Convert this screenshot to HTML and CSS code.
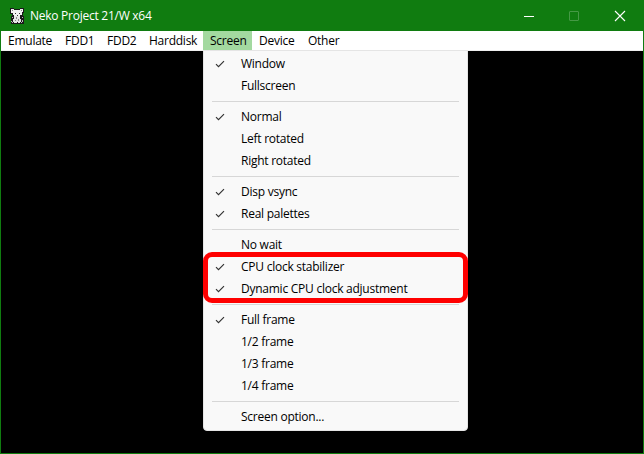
FILE: index.html
```html
<!DOCTYPE html>
<html lang="en">
<head>
<meta charset="utf-8">
<title>Neko Project 21/W x64</title>
<link rel="stylesheet" href="styles.css">
</head>
<body>
<svg width="0" height="0" class="defs"><symbol id="check" viewBox="0 0 10 8"><path d="M1 4.2 3.5 6.7 9 1.2" fill="none" stroke="#333" stroke-width="1.15"/></symbol></svg>
<div class="window">
  <header class="titlebar">
    <svg class="logo" width="16" height="16" viewBox="0 0 16 16" shape-rendering="crispEdges">
      <path fill="#1a1a1a" d="M1 0h4v1h6V0h4v5h-1v3h1v8H2V8h1V6H1z"/>
      <path fill="#f2f2f2" d="M2 1h3v1h6V1h3v3h-1v3h-2v1H5V7H4V5H2z"/>
      <path fill="#e6e6e6" d="M5 8h6v3h1v3h-1v1H9v-1H8v1H5v-1H4v-3h1z"/>
      <path fill="#888" d="M3 2h1v1H3zM12 2h1v1h-1zM7 9h1v2H7zM9 11h1v2H9zM6 12h1v1H6z"/>
      <path fill="#bbb" d="M3 9h1v1H3zM13 9h1v1h-1zM2 13h1v1H2zM13 12h1v2h-1zM3 14h1v1H3zM12 14h1v1h-1z"/>
      <path fill="#333" d="M6 5h1v1H6zM10 5h1v1h-1zM8 7h1v1H8z"/>
    </svg>
    <h1 class="title">Neko Project 21/W x64</h1>
    <svg class="controls" width="108" height="12" viewBox="0 0 108 12" fill="none">
      <path d="M0 6.5h10" stroke="#fff"/>
      <rect x="45.500" y="1.500" width="9" height="9" rx=".5" stroke="#459945"/>
      <path d="m91 1 10 10M101 1 91 11" stroke="#fff" stroke-width="1.1"/>
    </svg>
  </header>
  <nav class="menubar">
    <span class="tab emulate">Emulate</span><span class="tab fdd">FDD1</span><span class="tab fdd">FDD2</span><span class="tab harddisk">Harddisk</span><span class="tab screen active">Screen</span><span class="tab device">Device</span><span class="tab other">Other</span>
  </nav>
  <main class="display"></main>
</div>
<div class="menu">
  <div class="item"><svg class="check"><use href="#check"/></svg><span>Window</span></div>
  <div class="item"><span>Fullscreen</span></div>
  <hr>
  <div class="item"><svg class="check"><use href="#check"/></svg><span>Normal</span></div>
  <div class="item"><span>Left rotated</span></div>
  <div class="item"><span>Right rotated</span></div>
  <hr>
  <div class="item"><svg class="check"><use href="#check"/></svg><span>Disp vsync</span></div>
  <div class="item"><svg class="check"><use href="#check"/></svg><span>Real palettes</span></div>
  <hr>
  <div class="item"><span>No wait</span></div>
  <div class="item"><svg class="check"><use href="#check"/></svg><span>CPU clock stabilizer</span></div>
  <div class="item"><svg class="check"><use href="#check"/></svg><span>Dynamic CPU clock adjustment</span></div>
  <hr>
  <div class="item"><svg class="check"><use href="#check"/></svg><span>Full frame</span></div>
  <div class="item"><span>1/2 frame</span></div>
  <div class="item"><span>1/3 frame</span></div>
  <div class="item"><span>1/4 frame</span></div>
  <hr>
  <div class="item"><span>Screen option...</span></div>
</div>
<div class="highlight"></div>
</body>
</html>
```

FILE: styles.css
```css
* { box-sizing: border-box; }
body { margin: 0; font: 12px/22px "Open Sans", "Noto Sans", sans-serif; letter-spacing: -0.25px; color: #000; overflow: hidden; }
.defs { position: absolute; }
.window { width: 644px; height: 454px; background: #107c10; border: solid #107c10; border-width: 0 1px 1px; display: flex; flex-direction: column; }
.titlebar { height: 31px; display: flex; align-items: center; padding-left: 8px; color: #fff; }
.title { margin: 0 0 0 5px; font-size: 12px; font-weight: 400; letter-spacing: -0.26px; flex: 1; }
.controls { margin-right: 11px; }
.menubar { height: 20px; display: flex; background: #fff; border-bottom: 1px solid #f0f0f0; line-height: 20px; }
.tab { height: 19px; padding-left: 7px; white-space: nowrap; }
.emulate { width: 57px; }
.fdd { width: 42px; }
.harddisk { width: 61px; }
.screen { width: 49px; }
.device { width: 49px; }
.active { background: #a3d9a0; }
.display { flex: 1; background: #000; }
.menu { position: absolute; left: 203px; top: 50px; width: 265px; height: 381px; padding: 2px 8px; background: #f9f9f9; border: 1px solid #e5e5e5; border-radius: 0 0 4px 4px; }
.item { height: 22px; padding-left: 29px; position: relative; white-space: nowrap; }
.check { position: absolute; left: 3px; top: 7px; width: 10px; height: 8px; }
.menu hr { height: 1px; margin: 4px 0; border: 0; background: #d7d7d7; }
.highlight { position: absolute; left: 203px; top: 252px; width: 265px; height: 51px; border: 5px solid #f00; border-radius: 9px; }
```
